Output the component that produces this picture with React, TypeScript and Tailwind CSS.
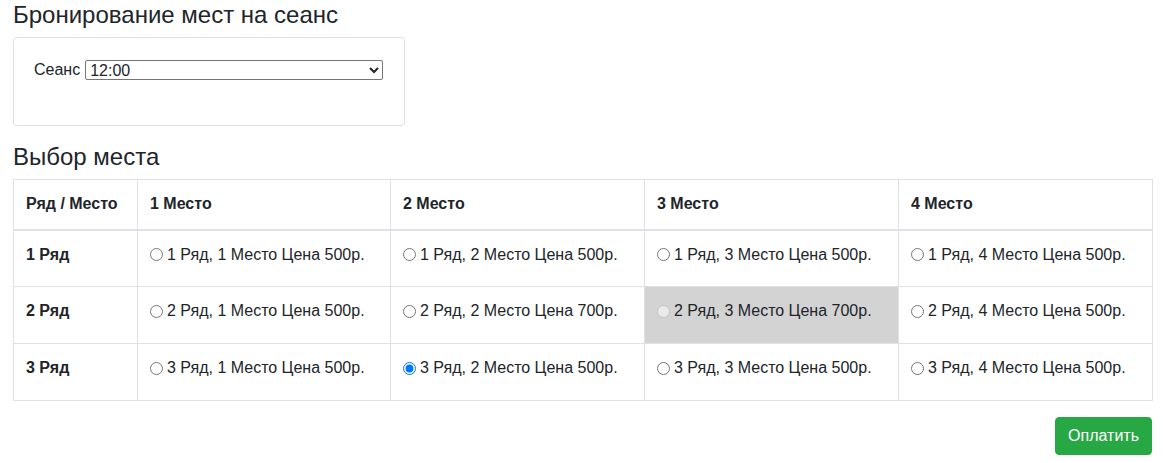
import { useState } from "react";

const seats = [
  ["1 Ряд, 1 Место Цена 500р.", "1 Ряд, 2 Место Цена 500р.", "1 Ряд, 3 Место Цена 500р.", "1 Ряд, 4 Место Цена 500р."],
  ["2 Ряд, 1 Место Цена 500р.", "2 Ряд, 2 Место Цена 700р.", "2 Ряд, 3 Место Цена 700р.", "2 Ряд, 4 Место Цена 500р."],
  ["3 Ряд, 1 Место Цена 500р.", "3 Ряд, 2 Место Цена 500р.", "3 Ряд, 3 Место Цена 500р.", "3 Ряд, 4 Место Цена 500р."],
];

// taken seats are greyed out and can't be picked
const taken = new Set(["1-2"]);

export default function App() {
  const [picked, setPicked] = useState("2-1");

  return (
    <div className="ml-[13px] w-[1139px] text-[16px] leading-6 text-[#212529]" style={{ fontFamily: '"Liberation Sans", Arial, sans-serif' }}>
      <h4 className="text-[24px] leading-[29px] font-medium mb-2">Бронирование мест на сеанс</h4>

      <div className="w-[392px] h-[89px] border border-[#dfdfdf] rounded-[4px] p-5 mb-4">
        <div className="flex items-center">
          <label htmlFor="session" className="mr-[5px]">Сеанс</label>
          <select
            id="session"
            defaultValue="12:00"
            className="w-[298px] h-[20px] border border-[#767676] rounded-[2px] bg-white text-[16px] leading-[18px]"
          >
            <option>12:00</option>
            <option>15:00</option>
            <option>18:00</option>
            <option>21:00</option>
          </select>
        </div>
      </div>

      <h4 className="text-[24px] leading-[29px] font-medium mb-2">Выбор места</h4>

      <table className="w-full table-fixed border-collapse border border-[#dee2e6] mb-4">
        <colgroup>
          <col className="w-[124px]" />
          <col className="w-[253px]" />
          <col className="w-[254px]" />
          <col className="w-[254px]" />
          <col className="w-[254px]" />
        </colgroup>
        <thead>
          <tr>
            <th className="h-[50px] text-left align-middle font-bold px-3 py-0 border border-[#dee2e6] border-b-2">Ряд / Место</th>
            {[1, 2, 3, 4].map((n) => (
              <th key={n} className="h-[50px] text-left align-middle font-bold px-3 py-0 border border-[#dee2e6] border-b-2">
                {n} Место
              </th>
            ))}
          </tr>
        </thead>
        <tbody>
          {seats.map((row, r) => (
            <tr key={r} className="h-[57px]">
              <th className="text-left align-top font-bold px-3 pt-3 pb-0 border border-[#dee2e6]">{r + 1} Ряд</th>
              {row.map((label, c) => {
                const key = `${r}-${c}`;
                const isTaken = taken.has(key);
                return (
                  <td
                    key={key}
                    className={`align-top px-3 pt-3 pb-0 border border-[#dee2e6] ${isTaken ? "bg-[#d3d3d3]" : ""}`}
                  >
                    <label className="flex items-center h-6">
                      <input
                        type="radio"
                        name="seat"
                        disabled={isTaken}
                        checked={picked === key}
                        onChange={() => setPicked(key)}
                        className="m-0 w-[13px] h-[13px]"
                      />
                      <span className="ml-[4px]">{label}</span>
                    </label>
                  </td>
                );
              })}
            </tr>
          ))}
        </tbody>
      </table>

      <div className="flex justify-end">
        <button className="h-[38px] bg-[#28a745] text-white rounded-[4px] border border-[#28a745] px-3 leading-6">
          Оплатить
        </button>
      </div>
    </div>
  );
}
